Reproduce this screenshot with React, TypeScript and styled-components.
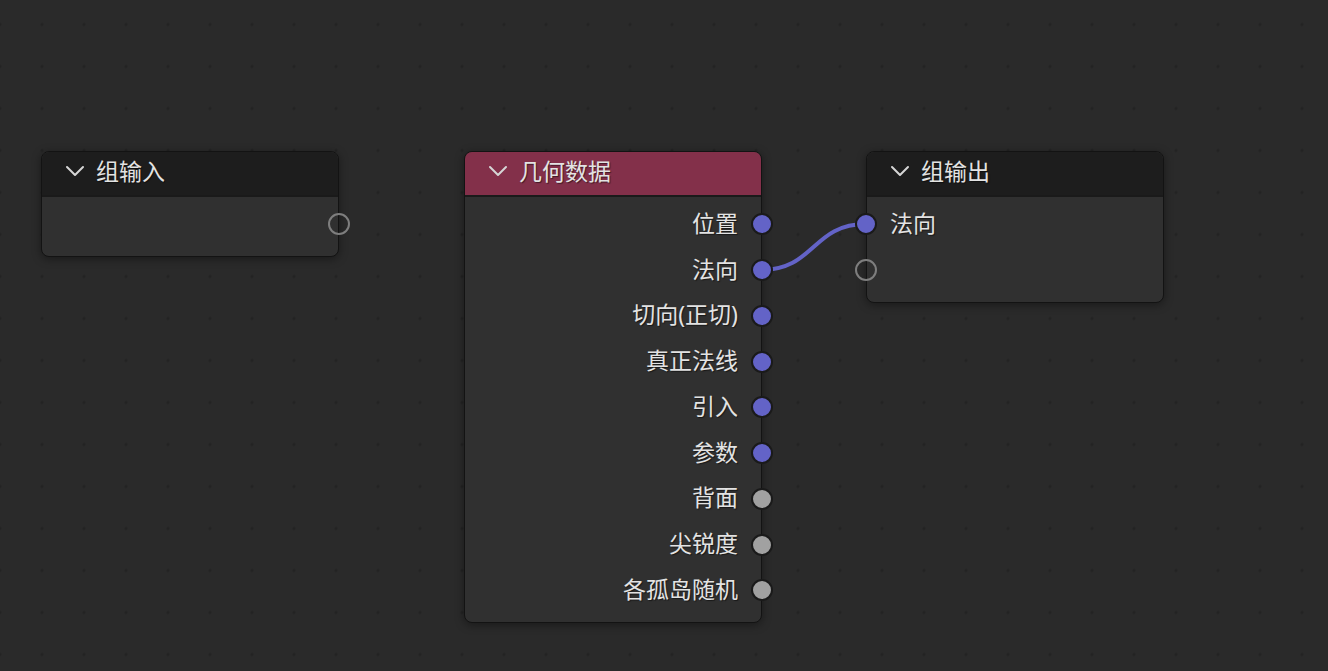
import React from 'react';
import styled, {createGlobalStyle} from "styled-components";

const GlobalStyle = createGlobalStyle`
  html, body {
    margin: 0;
    padding: 0;
    background: #2a2a2a;
    overflow: hidden;
  }
  * {
    box-sizing: border-box;
  }
`

type SocketKind = 'vector' | 'float' | 'empty'

type NodeRow = {
    label?: string
    kind: SocketKind
}

const geometryRows: NodeRow[] = [
    {label: '位置', kind: 'vector'},
    {label: '法向', kind: 'vector'},
    {label: '切向(正切)', kind: 'vector'},
    {label: '真正法线', kind: 'vector'},
    {label: '引入', kind: 'vector'},
    {label: '参数', kind: 'vector'},
    {label: '背面', kind: 'float'},
    {label: '尖锐度', kind: 'float'},
    {label: '各孤岛随机', kind: 'float'},
]

const Chevron = () => (
    <svg width="20" height="12" viewBox="0 0 20 12">
        <path d="M2 2 L10 10 L18 2" fill="none" stroke="#d6d6d6" strokeWidth="2" strokeLinecap="round" strokeLinejoin="round"/>
    </svg>
)

type NodeProps = {
    title: string
    left: number
    top: number
    headerColor?: string
    side: 'in' | 'out'
    rows: NodeRow[]
}

const EditorNode = ({title, left, top, headerColor, side, rows}: NodeProps) => {
    return (
        <StyledNode $left={left} $top={top}>
            <Header $bg={headerColor}>
                <Chevron/>
                <Title>{title}</Title>
            </Header>
            <Body>
                {rows.map((row, i) => (
                    <Row key={i} $side={side}>
                        {row.label && <Label>{row.label}</Label>}
                        <Socket $kind={row.kind} $side={side}/>
                    </Row>
                ))}
            </Body>
        </StyledNode>
    )
}

export default function App() {
    return (
        <>
            <GlobalStyle/>
            <Canvas>
                <LinkLayer width="1328" height="671" viewBox="0 0 1328 671">
                    <path d="M761 270 C 815 270, 812 224, 866 224" fill="none" stroke="#6363c7" strokeWidth="4" strokeLinecap="round"/>
                </LinkLayer>
                <EditorNode title={'组输入'} left={41} top={151} side={'out'} rows={[{kind: 'empty'}]}/>
                <EditorNode title={'几何数据'} left={464} top={151} side={'out'} headerColor={'#83304a'} rows={geometryRows}/>
                <EditorNode title={'组输出'} left={866} top={151} side={'in'}
                            rows={[{label: '法向', kind: 'vector'}, {kind: 'empty'}]}/>
            </Canvas>
        </>
    );
}

const Canvas = styled.div`
  position: relative;
  width: 1328px;
  height: 671px;
  overflow: hidden;
  background-color: #2a2a2a;
  background-image: radial-gradient(circle, #232323 1.3px, transparent 1.8px);
  background-size: 42px 42px;
  background-position: -21px 3.5px;
  font-family: 'Noto Sans', 'Noto Sans CJK SC', sans-serif;
`

const LinkLayer = styled.svg`
  position: absolute;
  left: 0;
  top: 0;
`

const StyledNode = styled.div<{ $left: number, $top: number }>`
  position: absolute;
  left: ${p => p.$left}px;
  top: ${p => p.$top}px;
  width: 298px;
  border: 1.5px solid #131313;
  border-radius: 8px;
  background: #303030;
  box-shadow: 0 2px 10px rgba(0, 0, 0, 0.4);
`

const Header = styled.div<{ $bg?: string }>`
  display: flex;
  align-items: center;
  gap: 11px;
  height: 44.5px;
  padding: 0 0 4px 23px;
  background: ${p => p.$bg || '#1d1d1d'};
  border-bottom: 2px solid #1a1a1a;
  border-radius: 7px 7px 0 0;
`

const Title = styled.span`
  font-size: 23px;
  line-height: 1;
  color: #e3e3e3;
  text-shadow: 1px 1px 1px rgba(0, 0, 0, 0.5);
`

const Body = styled.div`
  display: flex;
  flex-direction: column;
  padding: 5px 0 8.5px 0;
`

const Row = styled.div<{ $side: 'in' | 'out' }>`
  position: relative;
  display: flex;
  align-items: center;
  justify-content: ${p => p.$side === 'out' ? 'flex-end' : 'flex-start'};
  height: 45.75px;
  padding: 0 23px 2px;
`

const Label = styled.span`
  font-size: 23px;
  line-height: 1;
  color: #e3e3e3;
  text-shadow: 1px 1px 1px rgba(0, 0, 0, 0.5);
`

const Socket = styled.span<{ $kind: SocketKind, $side: 'in' | 'out' }>`
  position: absolute;
  top: 50%;
  ${p => p.$side === 'out' ? 'right: -12px;' : 'left: -12px;'}
  width: 22px;
  height: 22px;
  margin-top: -11px;
  border-radius: 50%;
  background: ${p => p.$kind === 'vector' ? '#6363c7' : p.$kind === 'float' ? '#a1a1a1' : 'transparent'};
  border: 2px solid ${p => p.$kind === 'empty' ? '#7e7e7e' : '#1a1a1a'};
`
